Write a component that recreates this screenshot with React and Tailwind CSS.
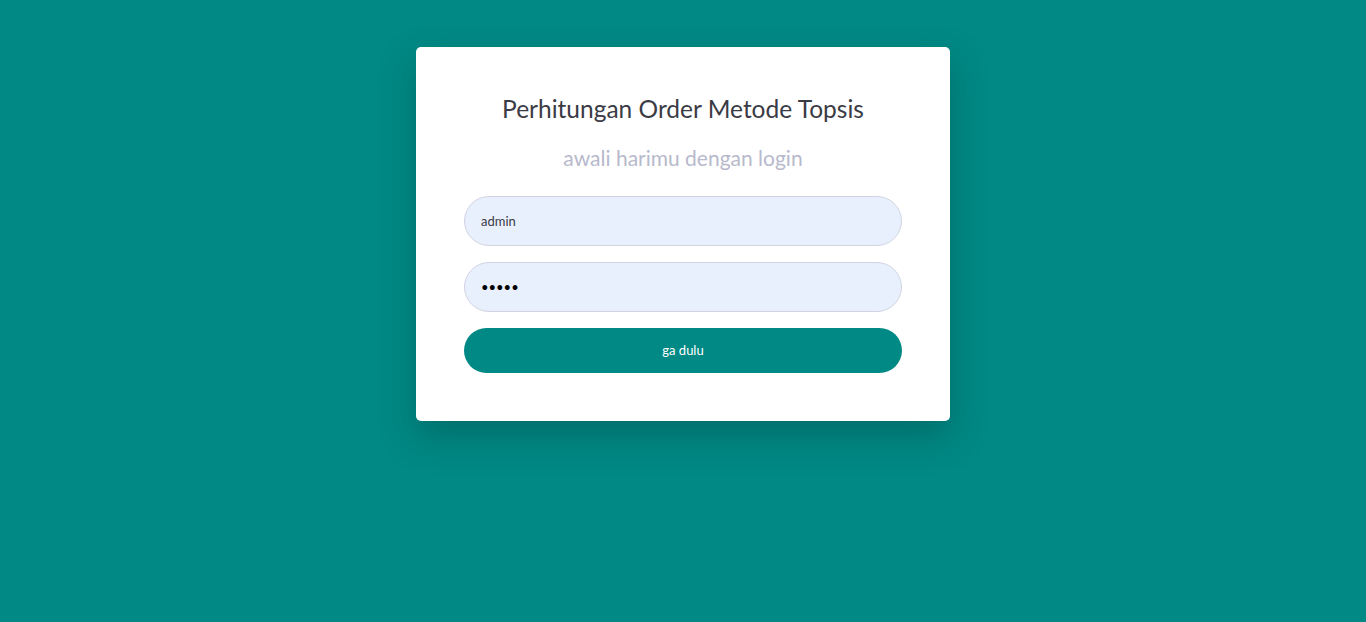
import { useState } from "react";

const App = () => {
  const [form, setForm] = useState({ username: "admin", password: "admin" });

  const handleChange = (e) => {
    setForm({ ...form, [e.target.name]: e.target.value });
  };

  return (
    <div
      className="min-h-screen bg-[#008985] flex justify-center"
      style={{ fontFamily: "Lato, 'Open Sans', sans-serif" }}
    >
      <div className="mt-[47px] w-[534px] h-[374px] bg-white rounded-[5px] shadow-[0_15px_35px_rgba(0,60,58,0.35)] px-12 pt-[44px]">
        <h1 className="text-center text-[24.5px] leading-[36px] text-[#3a3b45]">
          Perhitungan Order Metode Topsis
        </h1>
        <p className="text-center text-[21px] leading-[28px] text-[#b7b9cc] mt-[17px]">
          awali harimu dengan login
        </p>

        <form className="mt-[24px] flex flex-col" onSubmit={(e) => e.preventDefault()}>
          <input
            name="username"
            value={form.username}
            onChange={handleChange}
            className="h-[50px] rounded-full bg-[#e8f0fe] border border-[#d1d3e2] px-4 text-[13px] text-[#3a3b45] outline-none"
          />
          <input
            type="password"
            name="password"
            value={form.password}
            onChange={handleChange}
            className="mt-4 h-[50px] rounded-full bg-[#e8f0fe] border border-[#d1d3e2] px-4 text-[13px] text-black outline-none"
          />
          <button className="mt-4 h-[45px] rounded-full bg-[#008985] text-white text-[13px]">
            ga dulu
          </button>
        </form>
      </div>
    </div>
  );
};

export default App;
